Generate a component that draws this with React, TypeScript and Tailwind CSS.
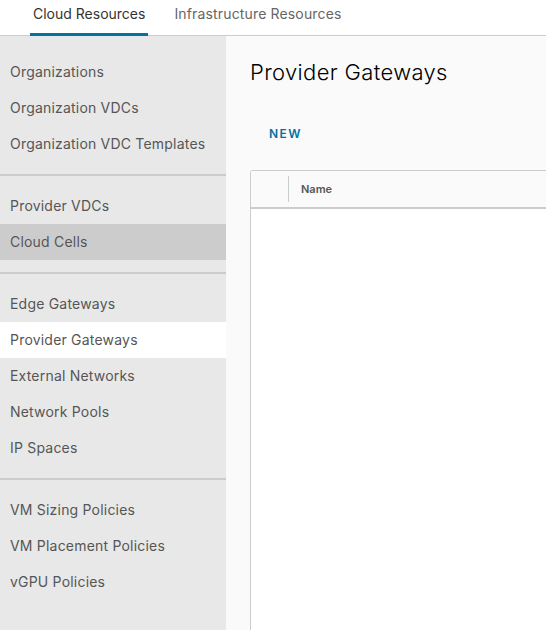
import React from 'react';

const sections: string[][] = [
  ['Organizations', 'Organization VDCs', 'Organization VDC Templates'],
  ['Provider VDCs', 'Cloud Cells'],
  ['Edge Gateways', 'Provider Gateways', 'External Networks', 'Network Pools', 'IP Spaces'],
  ['VM Sizing Policies', 'VM Placement Policies', 'vGPU Policies'],
];

const NavItem: React.FC<{ label: string }> = ({ label }) => {
  const active = label === 'Provider Gateways';
  const hovered = label === 'Cloud Cells';
  return (
    <div
      className={`h-9 flex items-center pl-[10px] pb-px text-[14px] tracking-[0.2px] text-[#565656] ${
        active ? 'bg-white' : hovered ? 'bg-[#cccccc]' : ''
      }`}
    >
      {label}
    </div>
  );
};

export default function App() {
  return (
    <div className="w-[546px] h-[630px] overflow-hidden bg-[#fafafa] flex flex-col font-['Inter',sans-serif]">
      {/* tabs */}
      <div className="h-9 shrink-0 bg-white border-b border-[#cccccc] flex items-end pl-[30px] gap-[26px]">
        <div className="px-[3px] pb-[9px] border-b-[3px] border-[#0072a3] -mb-px text-[14px] text-[#333333]">
          Cloud Resources
        </div>
        <div className="pb-[9px] -mb-px border-b-[3px] border-transparent text-[14px] tracking-[0.15px] text-[#666666]">
          Infrastructure Resources
        </div>
      </div>

      <div className="flex flex-1 min-h-0">
        {/* sidebar */}
        <div className="w-[226px] shrink-0 bg-[#e8e8e8]">
          {sections.map((items, i) => (
            <div
              key={i}
              className={`${i === 0 ? 'pt-[18px]' : 'pt-3'} pb-3 ${
                i < sections.length - 1 ? 'border-b-2 border-[#cccccc]' : ''
              }`}
            >
              {items.map(l => (
                <NavItem key={l} label={l} />
              ))}
            </div>
          ))}
        </div>

        {/* main */}
        <div className="flex-1 min-w-0 pl-6">
          <h1 className="mt-[22px] text-[22px] font-light tracking-[0.35px] text-[#000000] leading-7 whitespace-nowrap">
            Provider Gateways
          </h1>
          <button className="block mt-[40px] ml-[19px] text-[12px] leading-4 font-semibold tracking-[0.12em] text-[#0072a3]">
            NEW
          </button>
          <div className="mt-[28px] h-[600px] bg-white border border-[#cccccc] rounded-tl-[3px] border-r-0">
            <div className="h-[38px] bg-[#fafafa] border-b-2 border-[#cccccc] flex items-center">
              <div className="w-[38px] h-[26px] border-r border-[#cccccc]" />
              <div className="pl-3 text-[11px] font-semibold text-[#565656]">Name</div>
            </div>
          </div>
        </div>
      </div>
    </div>
  );
}
